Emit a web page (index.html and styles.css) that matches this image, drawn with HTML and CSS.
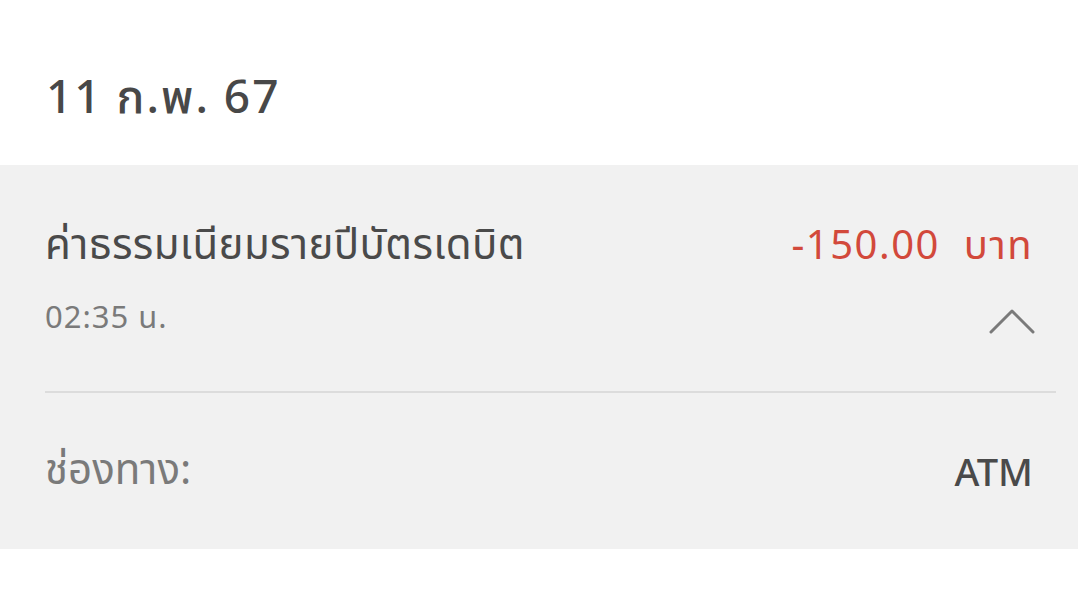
FILE: index.html
```html
<!DOCTYPE html>
<html lang="th">

<head>
  <meta charset="UTF-8">
  <meta name="viewport" content="width=device-width, initial-scale=1.0">
  <title>รายการ</title>
  <link rel="stylesheet" href="styles.css">
</head>

<body>
  <div class="dateHeader">11 ก.พ. 67</div>

  <div class="txnCard">
    <div class="txnTop">
      <div class="txnRow">
        <span class="txnName">ค่าธรรมเนียมรายปีบัตรเดบิต</span>
        <span class="txnAmount">-150.00&nbsp; บาท</span>
      </div>
      <div class="txnRow txnSub">
        <span class="txnTime">02:35 น.</span>
        <svg class="chevron" width="46" height="26" viewBox="0 0 46 26">
          <polyline points="2,24 23,3 44,24" fill="none" stroke="#7a7a7a" stroke-width="3" stroke-linecap="round" stroke-linejoin="round"/>
        </svg>
      </div>
    </div>
    <hr class="divider">
    <div class="txnRow txnDetail">
      <span class="detailLabel">ช่องทาง:</span>
      <span class="detailValue">ATM</span>
    </div>
  </div>
</body>

</html>
```

FILE: styles.css
```css
body {
  font-family: "Noto Sans", "Noto Sans Thai", "Open Sans", sans-serif;
  margin: 0;
  padding: 0;
  background-color: #fff;
  color: #4a4a4a;
}

.dateHeader {
  height: 165px;
  box-sizing: border-box;
  padding: 32px 0 0 46px;
  display: flex;
  align-items: center;
  font-size: 46px;
  font-weight: 500;
  letter-spacing: 2px;
  color: #484848;
}

.txnCard {
  background-color: #f1f1f1;
  padding: 0 22px 0 45px;
  height: 384px;
  display: flex;
  flex-direction: column;
}

.txnTop {
  padding: 49px 23px 0 0;
  height: 226px;
  box-sizing: border-box;
}

.txnRow {
  display: flex;
  justify-content: space-between;
  align-items: center;
}

.txnName {
  font-size: 42px;
  letter-spacing: 0.4px;
  color: #4a4a4a;
}

.txnAmount {
  font-size: 40px;
  letter-spacing: 1.5px;
  color: #d2493b;
}

.txnSub {
  margin-top: 17px;
  align-items: flex-start;
}

.txnTime {
  font-size: 31px;
  letter-spacing: 1px;
  color: #7a7a7a;
}

.chevron {
  margin-top: 13px;
  margin-right: -2px;
}

.divider {
  border: none;
  border-top: 2px solid #dcdcdc;
  margin: 0;
  width: 100%;
}

.txnDetail {
  flex: 1;
  padding-right: 23px;
}

.detailLabel {
  font-size: 42px;
  color: #7a7a7a;
}

.detailValue {
  font-size: 38px;
  font-weight: 500;
  color: #4a4a4a;
}
```
